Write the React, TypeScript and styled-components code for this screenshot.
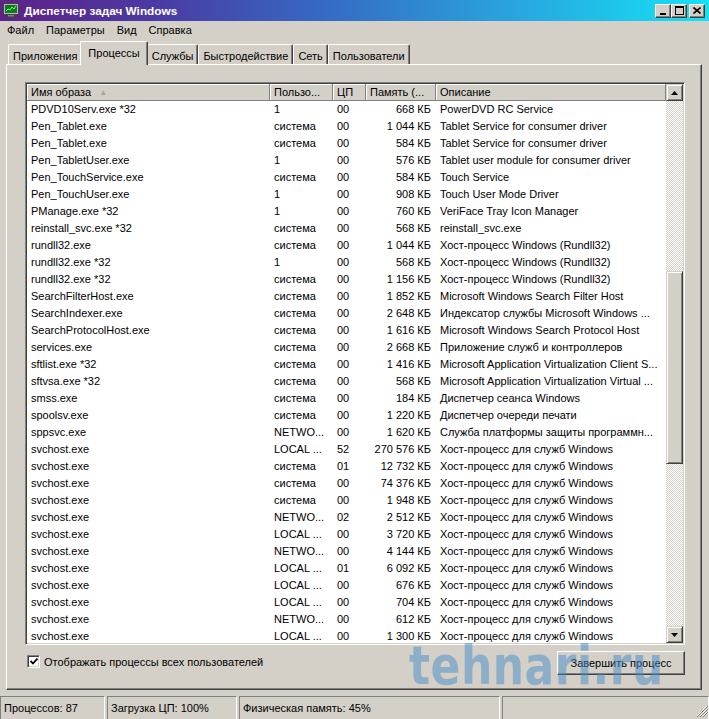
import React from "react";
import styled, { createGlobalStyle } from "styled-components";

const GlobalStyle = createGlobalStyle`
  html, body { margin: 0; padding: 0; background: #d4d0c8; }
  body {
    font-family: "Liberation Sans", Arial, sans-serif;
    font-size: 11px;
    color: #000;
  }
  * { box-sizing: border-box; }
`;

type Proc = [string, string, string, string, string];

const HOST = "Хост-процесс для служб Windows";

const processes: Proc[] = [
  ["PDVD10Serv.exe *32", "1", "00", "668 КБ", "PowerDVD RC Service"],
  ["Pen_Tablet.exe", "система", "00", "1 044 КБ", "Tablet Service for consumer driver"],
  ["Pen_Tablet.exe", "система", "00", "584 КБ", "Tablet Service for consumer driver"],
  ["Pen_TabletUser.exe", "1", "00", "576 КБ", "Tablet user module for consumer driver"],
  ["Pen_TouchService.exe", "система", "00", "584 КБ", "Touch Service"],
  ["Pen_TouchUser.exe", "1", "00", "908 КБ", "Touch User Mode Driver"],
  ["PManage.exe *32", "1", "00", "760 КБ", "VeriFace Tray Icon Manager"],
  ["reinstall_svc.exe *32", "система", "00", "568 КБ", "reinstall_svc.exe"],
  ["rundll32.exe", "система", "00", "1 044 КБ", "Хост-процесс Windows (Rundll32)"],
  ["rundll32.exe *32", "1", "00", "568 КБ", "Хост-процесс Windows (Rundll32)"],
  ["rundll32.exe *32", "система", "00", "1 156 КБ", "Хост-процесс Windows (Rundll32)"],
  ["SearchFilterHost.exe", "система", "00", "1 852 КБ", "Microsoft Windows Search Filter Host"],
  ["SearchIndexer.exe", "система", "00", "2 648 КБ", "Индексатор службы Microsoft Windows ..."],
  ["SearchProtocolHost.exe", "система", "00", "1 616 КБ", "Microsoft Windows Search Protocol Host"],
  ["services.exe", "система", "00", "2 668 КБ", "Приложение служб и контроллеров"],
  ["sftlist.exe *32", "система", "00", "1 416 КБ", "Microsoft Application Virtualization Client S..."],
  ["sftvsa.exe *32", "система", "00", "568 КБ", "Microsoft Application Virtualization Virtual ..."],
  ["smss.exe", "система", "00", "184 КБ", "Диспетчер сеанса  Windows"],
  ["spoolsv.exe", "система", "00", "1 220 КБ", "Диспетчер очереди печати"],
  ["sppsvc.exe", "NETWO...", "00", "1 620 КБ", "Служба платформы защиты программн..."],
  ["svchost.exe", "LOCAL ...", "52", "270 576 КБ", HOST],
  ["svchost.exe", "система", "01", "12 732 КБ", HOST],
  ["svchost.exe", "система", "00", "74 376 КБ", HOST],
  ["svchost.exe", "система", "00", "1 948 КБ", HOST],
  ["svchost.exe", "NETWO...", "02", "2 512 КБ", HOST],
  ["svchost.exe", "LOCAL ...", "00", "3 720 КБ", HOST],
  ["svchost.exe", "NETWO...", "00", "4 144 КБ", HOST],
  ["svchost.exe", "LOCAL ...", "01", "6 092 КБ", HOST],
  ["svchost.exe", "LOCAL ...", "00", "676 КБ", HOST],
  ["svchost.exe", "LOCAL ...", "00", "704 КБ", HOST],
  ["svchost.exe", "NETWO...", "00", "612 КБ", HOST],
  ["svchost.exe", "LOCAL ...", "00", "1 300 КБ", HOST],
];

const COLS = "243px 63px 33px 70px 1fr";

const Window = styled.div`
  position: relative;
  width: 709px;
  height: 719px;
  display: flex;
  flex-direction: column;
  overflow: hidden;
  background: #d4d0c8;
`;

const TitleBar = styled.div`
  height: 21px;
  flex-shrink: 0;
  display: flex;
  align-items: center;
  gap: 5px;
  padding: 0 4px 0 3px;
  background: linear-gradient(
    to right,
    #5e2188 0%,
    #4b3aa3 22%,
    #3569c2 45%,
    #2aa0dc 70%,
    #15e2f6 100%
  );
`;

const Title = styled.span`
  flex: 1;
  color: #fff;
  font-weight: bold;
  font-size: 11.8px;
`;

const CaptionButtons = styled.div`
  display: flex;
`;

const CaptionButton = styled.div<{ $gap?: boolean }>`
  width: 16px;
  height: 14px;
  margin-left: ${(p) => (p.$gap ? 2 : 0)}px;
  display: flex;
  align-items: center;
  justify-content: center;
  background: #d4d0c8;
  border: 1px solid;
  border-color: #fff #404040 #404040 #fff;
  box-shadow: inset -1px -1px #808080;
`;

const MenuBar = styled.div`
  height: 17px;
  flex-shrink: 0;
  display: flex;
  align-items: center;
  padding-left: 1px;
`;

const MenuItem = styled.span`
  padding: 0 6px;
  font-size: 11px;
`;

const TabStrip = styled.div`
  height: 26px;
  flex-shrink: 0;
  display: flex;
  align-items: flex-end;
  padding-left: 8px;
`;

const Tab = styled.div<{ $active?: boolean }>`
  position: relative;
  z-index: ${(p) => (p.$active ? 2 : 1)};
  height: ${(p) => (p.$active ? 24 : 20)}px;
  margin: ${(p) => (p.$active ? "0 -1px -1px -2px" : "0")};
  padding: ${(p) => (p.$active ? "0 7px 1px 7px" : "3px 4px 0 4px")};
  display: flex;
  align-items: center;
  font-size: 11px;
  background: #d4d0c8;
  border-top: 1px solid #fff;
  border-left: 1px solid #fff;
  border-right: 1px solid #404040;
  box-shadow: inset -1px 0 #808080;
  border-radius: 2px 2px 0 0;
`;

const Panel = styled.div`
  height: 626px;
  flex-shrink: 0;
  margin: 0 7px 0 6px;
  padding: 17px 0 0 18px;
  display: flex;
  flex-direction: column;
  border-top: 1px solid #fff;
  border-left: 1px solid #fff;
  border-right: 1px solid #404040;
  border-bottom: 1px solid #404040;
  box-shadow: inset -1px -1px #808080;
`;

const ListView = styled.div`
  width: 660px;
  height: 563px;
  display: flex;
  background: #fff;
  border: 1px solid;
  border-color: #808080 #fff #fff #808080;
  box-shadow: inset 1px 1px #404040, inset -1px -1px #d4d0c8;
  padding: 1px;
`;

const Table = styled.div`
  flex: 1;
  overflow: hidden;
  display: flex;
  flex-direction: column;
`;

const HeaderRow = styled.div`
  display: grid;
  grid-template-columns: ${COLS};
  height: 17px;
  flex-shrink: 0;
`;

const HeaderCell = styled.div`
  display: flex;
  align-items: center;
  gap: 8px;
  padding: 0 4px;
  background: #d4d0c8;
  white-space: nowrap;
  overflow: hidden;
  border-right: 1px solid #808080;
  border-bottom: 1px solid #808080;
  box-shadow: inset 1px 1px #fff;
`;

const SortArrow = styled.span`
  color: #a8a59e;
  font-size: 8px;
`;

const Row = styled.div`
  display: grid;
  grid-template-columns: ${COLS};
  height: 17px;
  flex-shrink: 0;
  align-items: center;
  padding-bottom: 1px;
`;

const Cell = styled.div<{ $right?: boolean }>`
  padding: ${(p) => (p.$right ? "0 5px 0 0" : "0 0 0 4px")};
  text-align: ${(p) => (p.$right ? "right" : "left")};
  white-space: nowrap;
  overflow: hidden;
`;

const ScrollBar = styled.div`
  width: 17px;
  display: flex;
  flex-direction: column;
`;

const ScrollButton = styled.div`
  width: 17px;
  height: 17px;
  flex-shrink: 0;
  display: flex;
  align-items: center;
  justify-content: center;
  background: #d4d0c8;
  border: 1px solid;
  border-color: #d4d0c8 #404040 #404040 #d4d0c8;
  box-shadow: inset 1px 1px #fff, inset -1px -1px #808080;
`;

const Track = styled.div<{ $grow: number }>`
  flex: ${(p) => p.$grow} 1 0;
  background-color: #d4d0c8;
  background-image: conic-gradient(#fff 25%, #d4d0c8 0 50%, #fff 0 75%, #d4d0c8 0);
  background-size: 2px 2px;
`;

const Thumb = styled(ScrollButton)`
  height: 193px;
`;

const BottomRow = styled.div`
  width: 660px;
  display: flex;
  justify-content: space-between;
  align-items: flex-start;
  padding-top: 6px;
`;

const CheckLabel = styled.label`
  display: flex;
  align-items: center;
  gap: 4px;
  margin: 4px 0 0 2px;
  font-size: 11px;
`;

const CheckBox = styled.span`
  width: 13px;
  height: 13px;
  display: flex;
  align-items: center;
  justify-content: center;
  background: #fff;
  border: 1px solid;
  border-color: #808080 #fff #fff #808080;
  box-shadow: inset 1px 1px #404040, inset -1px -1px #d4d0c8;
`;

const PushButton = styled.button`
  width: 128px;
  height: 24px;
  padding: 0;
  font-family: inherit;
  font-size: 11px;
  color: #000;
  background: #d4d0c8;
  border: 1px solid;
  border-color: #fff #404040 #404040 #fff;
  box-shadow: inset -1px -1px #808080;
`;

const StatusBar = styled.div`
  height: 24px;
  flex-shrink: 0;
  margin-top: 6px;
  display: flex;
  gap: 2px;
`;

const StatusPane = styled.div<{ $w?: number }>`
  position: relative;
  ${(p) => (p.$w ? `width: ${p.$w}px;` : "flex: 1;")}
  display: flex;
  align-items: center;
  padding: 0 0 1px 3px;
  font-size: 11px;
  border: 1px solid;
  border-color: #808080 #fff #fff #808080;
`;

const Grip = styled.svg`
  position: absolute;
  right: 0;
  bottom: 2px;
`;

const Watermark = styled.div`
  position: absolute;
  left: 409px;
  top: 640px;
  font-family: "DejaVu Sans", sans-serif;
  font-weight: bold;
  font-size: 44px;
  line-height: 44px;
  letter-spacing: 0.5px;
  color: rgba(70, 140, 200, 0.5);
  transform: scaleY(1.2);
  transform-origin: top left;
  pointer-events: none;
  white-space: nowrap;
`;

function AppIcon() {
  return (
    <svg width="16" height="15" viewBox="0 0 16 15">
      <rect x="0.5" y="0.5" width="15" height="11" fill="#b8b8b8" stroke="#404040" />
      <rect x="2" y="2" width="12" height="8" fill="#0a7a1a" />
      <polyline points="3,8 5,6 7,7 9,4 11,6 13,3" fill="none" stroke="#7cff7c" strokeWidth="1" />
      <rect x="5" y="12" width="6" height="2" fill="#808080" />
      <rect x="3" y="13.5" width="10" height="1.5" fill="#404040" />
    </svg>
  );
}

function ArrowIcon({ down }: { down?: boolean }) {
  return (
    <svg width="7" height="4" viewBox="0 0 7 4">
      <polygon points={down ? "0,0 7,0 3.5,4" : "0,4 7,4 3.5,0"} fill="#000" />
    </svg>
  );
}

export default function App() {
  const thumbBefore = 170;
  const thumbAfter = 162;

  return (
    <>
      <GlobalStyle />
      <Window>
        <TitleBar>
          <AppIcon />
          <Title>Диспетчер задач Windows</Title>
          <CaptionButtons>
            <CaptionButton>
              <svg width="8" height="8" viewBox="0 0 8 8">
                <rect x="1" y="6" width="6" height="2" fill="#000" />
              </svg>
            </CaptionButton>
            <CaptionButton>
              <svg width="9" height="9" viewBox="0 0 9 9">
                <rect x="0.5" y="0.5" width="8" height="8" fill="none" stroke="#000" />
                <rect x="0" y="0" width="9" height="2" fill="#000" />
              </svg>
            </CaptionButton>
            <CaptionButton $gap>
              <svg width="8" height="7" viewBox="0 0 8 7">
                <path d="M0.5 0.5 L7.5 6.5 M7.5 0.5 L0.5 6.5" stroke="#000" strokeWidth="1.6" />
              </svg>
            </CaptionButton>
          </CaptionButtons>
        </TitleBar>

        <MenuBar>
          <MenuItem>Файл</MenuItem>
          <MenuItem>Параметры</MenuItem>
          <MenuItem>Вид</MenuItem>
          <MenuItem>Справка</MenuItem>
        </MenuBar>

        <TabStrip>
          <Tab>Приложения</Tab>
          <Tab $active>Процессы</Tab>
          <Tab>Службы</Tab>
          <Tab>Быстродействие</Tab>
          <Tab>Сеть</Tab>
          <Tab>Пользователи</Tab>
        </TabStrip>

        <Panel>
          <ListView>
            <Table>
              <HeaderRow>
                <HeaderCell>
                  Имя образа <SortArrow>▲</SortArrow>
                </HeaderCell>
                <HeaderCell>Пользо...</HeaderCell>
                <HeaderCell>ЦП</HeaderCell>
                <HeaderCell>Память (...</HeaderCell>
                <HeaderCell>Описание</HeaderCell>
              </HeaderRow>
              {processes.map((p, i) => (
                <Row key={i}>
                  <Cell>{p[0]}</Cell>
                  <Cell>{p[1]}</Cell>
                  <Cell>{p[2]}</Cell>
                  <Cell $right>{p[3]}</Cell>
                  <Cell>{p[4]}</Cell>
                </Row>
              ))}
            </Table>
            <ScrollBar>
              <ScrollButton>
                <ArrowIcon />
              </ScrollButton>
              <Track $grow={thumbBefore} />
              <Thumb />
              <Track $grow={thumbAfter} />
              <ScrollButton>
                <ArrowIcon down />
              </ScrollButton>
            </ScrollBar>
          </ListView>

          <BottomRow>
            <CheckLabel>
              <CheckBox>
                <svg width="8" height="7" viewBox="0 0 8 7">
                  <path d="M0.5 3 L3 5.5 L7.5 0.5" fill="none" stroke="#000" strokeWidth="1.8" />
                </svg>
              </CheckBox>
              Отображать процессы всех пользователей
            </CheckLabel>
            <PushButton>Завершить процесс</PushButton>
          </BottomRow>
        </Panel>

        <StatusBar>
          <StatusPane $w={105}>Процессов: 87</StatusPane>
          <StatusPane $w={130}>Загрузка ЦП: 100%</StatusPane>
          <StatusPane $w={261}>Физическая память: 45%</StatusPane>
          <StatusPane>
            <Grip width="12" height="12" viewBox="0 0 12 12">
              <path d="M11 1 L1 11 M11 4 L4 11 M11 7 L7 11" stroke="#fff" strokeWidth="1" />
              <path d="M12 1 L1 12 M12 4 L4 12 M12 7 L7 12" stroke="#808080" strokeWidth="1" />
            </Grip>
          </StatusPane>
        </StatusBar>

        <Watermark>tehnari.ru</Watermark>
      </Window>
    </>
  );
}
